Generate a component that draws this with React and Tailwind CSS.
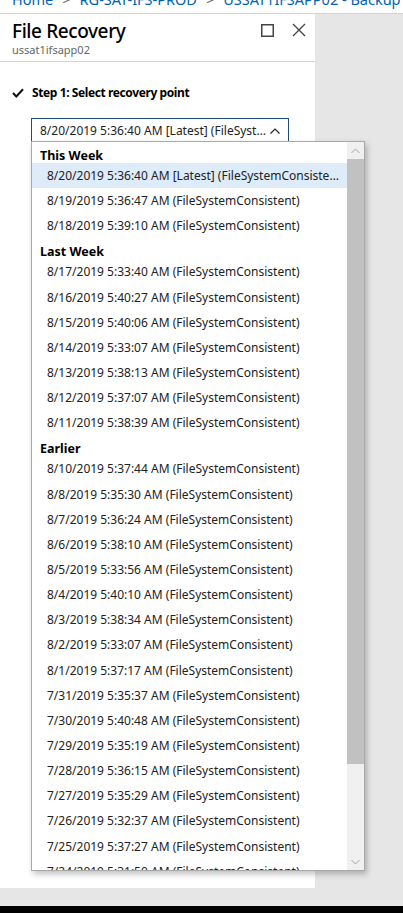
import React from "react";

const groups = [
  {
    label: "This Week",
    items: [
      "8/20/2019 5:36:40 AM [Latest] (FileSystemConsistent)",
      "8/19/2019 5:36:47 AM (FileSystemConsistent)",
      "8/18/2019 5:39:10 AM (FileSystemConsistent)",
    ],
  },
  {
    label: "Last Week",
    items: [
      "8/17/2019 5:33:40 AM (FileSystemConsistent)",
      "8/16/2019 5:40:27 AM (FileSystemConsistent)",
      "8/15/2019 5:40:06 AM (FileSystemConsistent)",
      "8/14/2019 5:33:07 AM (FileSystemConsistent)",
      "8/13/2019 5:38:13 AM (FileSystemConsistent)",
      "8/12/2019 5:37:07 AM (FileSystemConsistent)",
      "8/11/2019 5:38:39 AM (FileSystemConsistent)",
    ],
  },
  {
    label: "Earlier",
    items: [
      "8/10/2019 5:37:44 AM (FileSystemConsistent)",
      "8/8/2019 5:35:30 AM (FileSystemConsistent)",
      "8/7/2019 5:36:24 AM (FileSystemConsistent)",
      "8/6/2019 5:38:10 AM (FileSystemConsistent)",
      "8/5/2019 5:33:56 AM (FileSystemConsistent)",
      "8/4/2019 5:40:10 AM (FileSystemConsistent)",
      "8/3/2019 5:38:34 AM (FileSystemConsistent)",
      "8/2/2019 5:33:07 AM (FileSystemConsistent)",
      "8/1/2019 5:37:17 AM (FileSystemConsistent)",
      "7/31/2019 5:35:37 AM (FileSystemConsistent)",
      "7/30/2019 5:40:48 AM (FileSystemConsistent)",
      "7/29/2019 5:35:19 AM (FileSystemConsistent)",
      "7/28/2019 5:36:15 AM (FileSystemConsistent)",
      "7/27/2019 5:35:29 AM (FileSystemConsistent)",
      "7/26/2019 5:32:37 AM (FileSystemConsistent)",
      "7/25/2019 5:37:27 AM (FileSystemConsistent)",
      "7/24/2019 5:31:50 AM (FileSystemConsistent)",
    ],
  },
];

const font = { fontFamily: "'Segoe UI', 'Noto Sans', sans-serif" };

const Breadcrumb = () => (
  <div className="h-[14px] shrink-0 overflow-hidden border-b border-[#d4d4d4] bg-white">
    <div className="-mt-[12px] flex items-center whitespace-nowrap pl-[12px] text-[14.5px] leading-[22px] text-[#0063b1]">
      <span>Home</span>
      <span className="mx-[9px] text-[#666]">&gt;</span>
      <span>RG-SAT-IFS-PROD</span>
      <span className="mx-[9px] text-[#666]">&gt;</span>
      <span>USSAT1IFSAPP02 - Backup</span>
      <span className="mx-[9px] text-[#666]">&gt;</span>
      <span className="text-black">File Recovery</span>
    </div>
  </div>
);

const PanelHeader = () => (
  <div className="flex items-start justify-between border-b border-[#d4d4d4] pb-[5px] pl-[12px] pr-[9px] pt-[6px]">
    <div>
      <div className="text-[19px] font-medium leading-[22px] tracking-[-0.4px] text-black">File Recovery</div>
      <div className="pt-[1px] text-[11px] leading-[13px] text-[#666]">ussat1ifsapp02</div>
    </div>
    <div className="flex items-center gap-[18px] pt-[3px]">
      <svg width="13" height="13" viewBox="0 0 13 13">
        <rect x="0.75" y="0.75" width="11.5" height="11.5" fill="none" stroke="#444" strokeWidth="1.5" />
      </svg>
      <svg width="14" height="14" viewBox="0 0 14 14">
        <path d="M1 1 L13 13 M13 1 L1 13" stroke="#444" strokeWidth="1.3" fill="none" />
      </svg>
    </div>
  </div>
);

const Scrollbar = () => (
  <div className="flex w-[17px] shrink-0 flex-col bg-[#f0f0f0]">
    <div className="flex h-[17px] items-center justify-center">
      <svg width="9" height="6" viewBox="0 0 9 6">
        <path d="M0.5 5 L4.5 1 L8.5 5" stroke="#a3a3a3" strokeWidth="1" fill="none" />
      </svg>
    </div>
    <div className="h-[605px] bg-[#c1c1c1]" />
    <div className="flex-1" />
    <div className="flex h-[17px] items-center justify-center">
      <svg width="9" height="6" viewBox="0 0 9 6">
        <path d="M0.5 1 L4.5 5 L8.5 1" stroke="#a3a3a3" strokeWidth="1" fill="none" />
      </svg>
    </div>
  </div>
);

const DropdownList = () => (
  <div className="absolute left-[31px] top-[127px] flex h-[730px] w-[334px] border border-[#a9a9a9] bg-white shadow-[2px_3px_6px_rgba(0,0,0,0.25)]">
    <div className="min-w-0 flex-1 overflow-hidden">
      {groups.map((g) => (
        <div key={g.label}>
          <div className="h-[21px] pl-[8px] pt-[5px] text-[12.5px] font-bold leading-[17px] text-black">
            {g.label}
          </div>
          {g.items.map((it, i) => (
            <div
              key={it}
              className={
                g.label === "This Week" && i === 0
                  ? "h-[25.15px] truncate bg-[#deecf9] pl-[15px] pr-[8px] text-[12px] leading-[25px] text-[#222]"
                  : "h-[25.15px] truncate pl-[15px] pr-[8px] text-[12px] leading-[26px] text-[#222]"
              }
            >
              {it}
            </div>
          ))}
        </div>
      ))}
    </div>
    <Scrollbar />
  </div>
);

const Panel = () => (
  <div className="relative w-[315px] shrink-0 bg-white">
    <PanelHeader />
    <div className="flex items-center gap-[8px] pl-[12px] pt-[22px]">
      <svg width="12" height="10" viewBox="0 0 12 10">
        <path d="M1 5 L4.3 8.5 L11 1.2" stroke="#111" strokeWidth="2" fill="none" />
      </svg>
      <span className="text-[12px] font-bold leading-[18px] tracking-[-0.4px] text-black">Step 1: Select recovery point</span>
    </div>
    <div className="ml-[31px] mt-[16px] flex h-[25px] w-[258px] items-center justify-between border border-[#1f4e79] pl-[8px] pr-[8px]">
      <span className="truncate text-[12px] text-[#222]">8/20/2019 5:36:40 AM [Latest] (FileSyst...</span>
      <svg width="10" height="6" viewBox="0 0 10 6" className="ml-[4px] shrink-0">
        <path d="M0.5 5.5 L5 1 L9.5 5.5" stroke="#222" strokeWidth="1.2" fill="none" />
      </svg>
    </div>
    <DropdownList />
  </div>
);

export default function App() {
  return (
    <div className="flex h-[913px] w-[403px] flex-col overflow-hidden bg-[#e6e6e6]" style={font}>
      <Breadcrumb />
      <div className="flex h-[874px] shrink-0">
        <Panel />
        <div className="flex-1" />
      </div>
      <div className="h-[18px] shrink-0 bg-[#e6e6e6]" />
      <div className="flex-1 bg-black" />
    </div>
  );
}
